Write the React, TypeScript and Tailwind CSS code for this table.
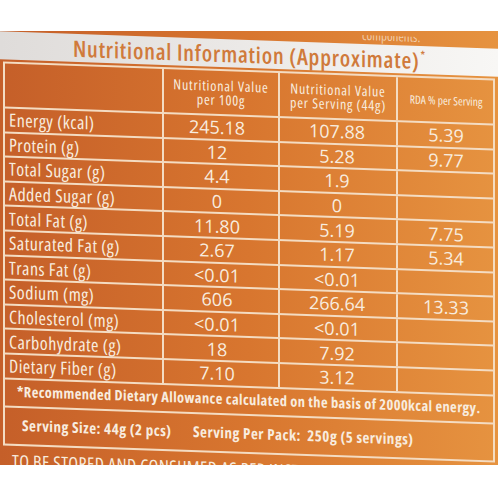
import React from "react";

const rows = [
  ["Energy (kcal)", "245.18", "107.88", "5.39"],
  ["Protein (g)", "12", "5.28", "9.77"],
  ["Total Sugar (g)", "4.4", "1.9", ""],
  ["Added Sugar (g)", "0", "0", ""],
  ["Total Fat (g)", "11.80", "5.19", "7.75"],
  ["Saturated Fat (g)", "2.67", "1.17", "5.34"],
  ["Trans Fat (g)", "<0.01", "<0.01", ""],
  ["Sodium (mg)", "606", "266.64", "13.33"],
  ["Cholesterol (mg)", "<0.01", "<0.01", ""],
  ["Carbohydrate (g)", "18", "7.92", ""],
  ["Dietary Fiber (g)", "7.10", "3.12", ""],
];

export default function App() {
  return (
    <div className="w-[500px] h-[500px] bg-white overflow-hidden font-['Open_Sans',sans-serif] text-[#f8ecdf]">
      <div className="h-[31px]" />

      {/* orange label */}
      <div className="w-[498px] h-[434px] overflow-hidden bg-linear-to-r from-[#c55f29] via-[#d8762f] to-[#e69340]">
        <div className="w-[498px] skew-y-2 origin-center">
          <div className="h-[9px] overflow-hidden pl-[362px] text-[13px] leading-[14px] font-stretch-condensed text-[#f8ecdf]/70">
            <div className="-mt-[7px]">components.</div>
          </div>

          {/* title */}
          <div className="h-[28px] bg-linear-to-r from-[#dfdcda] to-[#f8f7f5] pl-[73px] pb-[2px] flex items-end text-[#d07a3b] text-[22.5px] tracking-[0.8px] leading-none font-semibold font-stretch-condensed whitespace-nowrap">
            Nutritional Information (Approximate)
            <span className="text-[11px] self-start mt-[3px] ml-[1px]">*</span>
          </div>

          {/* table */}
          <div className="mt-[2px] mx-[3px] border-2 border-[#f4dcc2]">
            <div className="grid grid-cols-[157px_116px_118px_98px] h-[43px]">
              <div />
              <div className="border-l-2 border-[#f4dcc2] flex flex-col items-center justify-center text-[14px] tracking-[0.8px] leading-[14px] font-stretch-condensed">
                <span>Nutritional Value</span>
                <span>per 100g</span>
              </div>
              <div className="border-l-2 border-[#f4dcc2] flex flex-col items-center justify-center text-[14px] tracking-[0.8px] leading-[14px] font-stretch-condensed">
                <span>Nutritional Value</span>
                <span>per Serving (44g)</span>
              </div>
              <div className="border-l-2 border-[#f4dcc2] flex items-center justify-center text-[11.5px] font-stretch-condensed">
                RDA % per Serving
              </div>
            </div>

            {rows.map((r) => (
              <div
                key={r[0]}
                className="grid grid-cols-[157px_116px_118px_98px] h-[24.6px] border-t-2 border-[#f4dcc2]"
              >
                <div className="pl-[4px] flex items-center text-[18px] tracking-[0.45px] leading-none font-stretch-condensed whitespace-nowrap">{r[0]}</div>
                <div className="border-l-2 border-[#f4dcc2] flex items-center justify-center pr-[8px] text-[18px] leading-none">{r[1]}</div>
                <div className="border-l-2 border-[#f4dcc2] flex items-center justify-center pr-[2px] text-[18px] leading-none">{r[2]}</div>
                <div className="border-l-2 border-[#f4dcc2] flex items-center justify-center text-[18px] leading-none">{r[3]}</div>
              </div>
            ))}

            <div className="h-[28px] border-t-2 border-[#f4dcc2] flex items-center pl-[12px] text-[14.5px] tracking-[0.38px] font-bold leading-none font-stretch-condensed whitespace-nowrap">
              *Recommended Dietary Allowance calculated on the basis of 2000kcal energy.
            </div>
            <div className="h-[38px] border-t-2 border-[#f4dcc2] flex items-center pl-[17px] text-[15px] tracking-[0.5px] font-bold leading-none font-stretch-condensed whitespace-nowrap">
              <span className="w-[171px]">Serving Size: 44g (2 pcs)</span>
              <span>Serving Per Pack:&nbsp; 250g (5 servings)</span>
            </div>
          </div>

          <div className="mt-[6px] pl-[12px] text-[18px] tracking-[0.4px] leading-none font-stretch-condensed whitespace-nowrap">
            TO BE STORED AND CONSUMED AS PER INSTRUCTIONS
          </div>
        </div>
      </div>
    </div>
  );
}
